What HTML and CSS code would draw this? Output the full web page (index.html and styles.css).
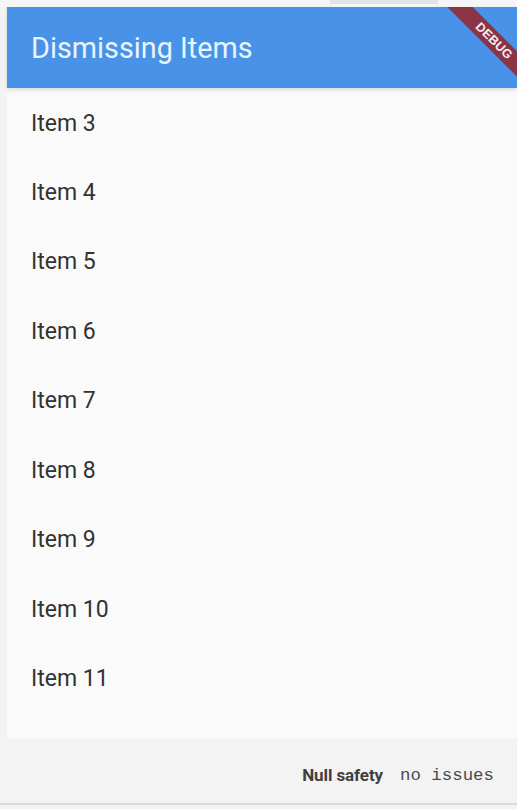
FILE: index.html
```html
<!DOCTYPE html>
<html>
<head>
<meta charset="utf-8">
<link rel="stylesheet" href="styles.css">
</head>
<body>
<div class="top-strip"><div class="tab-hint"></div></div>
<div class="device">
  <header class="app-bar">
    <h1 class="title">Dismissing Items</h1>
    <div class="debug-banner"><span>DEBUG</span></div>
  </header>
  <ul class="list">
    <li class="item">Item 3</li>
    <li class="item">Item 4</li>
    <li class="item">Item 5</li>
    <li class="item">Item 6</li>
    <li class="item">Item 7</li>
    <li class="item">Item 8</li>
    <li class="item">Item 9</li>
    <li class="item">Item 10</li>
    <li class="item">Item 11</li>
  </ul>
</div>
<footer class="status">
  <span class="ns-label">Null safety</span>
  <span class="ns-value">no issues</span>
</footer>
<div class="bottom-line"></div>
</body>
</html>
```
FILE: styles.css
```css
* { box-sizing: border-box; }
html, body { margin: 0; padding: 0; }
body {
  width: 517px;
  height: 809px;
  background: #f3f3f3;
  font-family: Roboto, "Noto Sans", sans-serif;
  display: flex;
  flex-direction: column;
  overflow: hidden;
}
.top-strip {
  height: 7px;
  background: #f6f6f6;
  position: relative;
}
.tab-hint {
  position: absolute;
  left: 330px;
  top: 0;
  width: 108px;
  height: 4px;
  background: #dfe3ea;
}
.device {
  margin-left: 7px;
  height: 731px;
  background: #fafafa;
  display: flex;
  flex-direction: column;
}
.app-bar {
  height: 81px;
  background: #4893e8;
  display: flex;
  align-items: center;
  padding-left: 24px;
  position: relative;
  overflow: hidden;
  box-shadow: 0 2px 4px rgba(0,0,0,0.12);
  z-index: 1;
}
.title {
  margin: 0;
  font-weight: 400;
  font-size: 28.8px;
  color: #eaf4ff;
  letter-spacing: 0;
}
.debug-banner {
  position: absolute;
  left: 427px;
  top: 25px;
  width: 120px;
  height: 18px;
  background: #8a3446;
  transform: rotate(45deg);
  display: flex;
  align-items: center;
  justify-content: center;
}
.debug-banner span {
  font-family: "Liberation Sans", sans-serif;
  font-weight: 700;
  font-size: 12.5px;
  color: #f6ecef;
  letter-spacing: 0.2px;
}
.list {
  list-style: none;
  margin: 0;
  padding: 0;
}
.item {
  height: 69.5px;
  display: flex;
  align-items: center;
  padding-left: 24px;
  font-size: 23px;
  color: #333333;
}
.item:first-child {
  height: 69.5px;
  padding-top: 1px;
}
.status {
  height: 65px;
  display: flex;
  align-items: center;
  justify-content: flex-end;
  padding-right: 23px;
  gap: 17px;
  padding-top: 9px;
}
.ns-label {
  font-family: Roboto, sans-serif;
  font-weight: 700;
  font-size: 17px;
  letter-spacing: -0.1px;
  color: #404040;
}
.ns-value {
  font-family: "Liberation Mono", monospace;
  font-size: 17.4px;
  color: #4a4a4a;
}
.bottom-line {
  height: 2px;
  background: #d9d9d9;
}
```
